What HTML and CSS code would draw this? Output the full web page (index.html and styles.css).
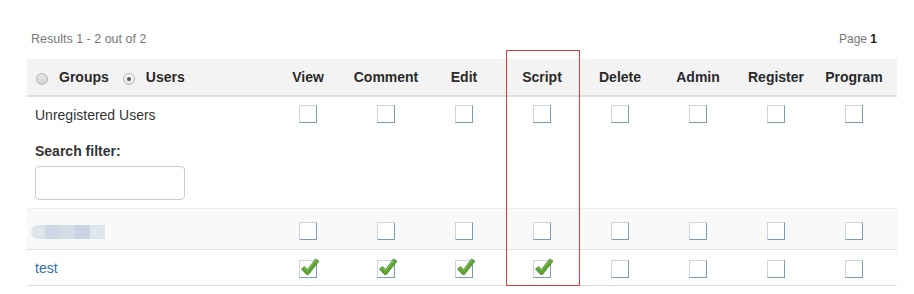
FILE: index.html
```html
<!DOCTYPE html>
<html>
<head>
<meta charset="utf-8">
<link rel="stylesheet" href="styles.css">
</head>
<body>
<div class="wrap">
  <div class="topline">
    <span class="results">Results 1 - 2 out of 2</span>
    <span class="page">Page <b>1</b></span>
  </div>
  <div class="grid">
    <div class="row head">
      <div class="cell first">
        <span class="radio"></span><span class="rlabel">Groups</span>
        <span class="radio on"></span><span class="rlabel">Users</span>
      </div>
      <div class="cell">View</div>
      <div class="cell">Comment</div>
      <div class="cell">Edit</div>
      <div class="cell">Script</div>
      <div class="cell">Delete</div>
      <div class="cell">Admin</div>
      <div class="cell">Register</div>
      <div class="cell">Program</div>
    </div>
    <div class="row r1">
      <div class="cell first">
        <div class="line">Unregistered Users</div>
        <div class="filter-label">Search filter:</div>
        <input class="filter" type="text">
      </div>
      <div class="cell"><span class="cb"></span></div>
      <div class="cell"><span class="cb"></span></div>
      <div class="cell"><span class="cb"></span></div>
      <div class="cell"><span class="cb"></span></div>
      <div class="cell"><span class="cb"></span></div>
      <div class="cell"><span class="cb"></span></div>
      <div class="cell"><span class="cb"></span></div>
      <div class="cell"><span class="cb"></span></div>
    </div>
    <div class="row r2">
      <div class="cell first">
        <div class="blur"><i class="b1"></i><i class="b2"></i><i class="b3"></i><i class="b4"></i><i class="b5"></i></div>
      </div>
      <div class="cell"><span class="cb"></span></div>
      <div class="cell"><span class="cb"></span></div>
      <div class="cell"><span class="cb"></span></div>
      <div class="cell"><span class="cb"></span></div>
      <div class="cell"><span class="cb"></span></div>
      <div class="cell"><span class="cb"></span></div>
      <div class="cell"><span class="cb"></span></div>
      <div class="cell"><span class="cb"></span></div>
    </div>
    <div class="row r3">
      <div class="cell first"><a class="link" href="#">test</a></div>
      <div class="cell"><span class="cb"><svg class="chk" viewBox="0 0 20 20" width="20" height="20"><path d="M1.5 11 L4.5 8.5 L7.5 11.5 L15.5 1 L19 3 L8.5 16.5 L6.5 16.5 Z" fill="#5da431" stroke="#3f7d1f" stroke-width="0.7" stroke-linejoin="round"/><path d="M4 9.5 L7.3 12.6 L16 2" fill="none" stroke="#8cc865" stroke-width="1"/></svg></span></div>
      <div class="cell"><span class="cb"><svg class="chk" viewBox="0 0 20 20" width="20" height="20"><path d="M1.5 11 L4.5 8.5 L7.5 11.5 L15.5 1 L19 3 L8.5 16.5 L6.5 16.5 Z" fill="#5da431" stroke="#3f7d1f" stroke-width="0.7" stroke-linejoin="round"/><path d="M4 9.5 L7.3 12.6 L16 2" fill="none" stroke="#8cc865" stroke-width="1"/></svg></span></div>
      <div class="cell"><span class="cb"><svg class="chk" viewBox="0 0 20 20" width="20" height="20"><path d="M1.5 11 L4.5 8.5 L7.5 11.5 L15.5 1 L19 3 L8.5 16.5 L6.5 16.5 Z" fill="#5da431" stroke="#3f7d1f" stroke-width="0.7" stroke-linejoin="round"/><path d="M4 9.5 L7.3 12.6 L16 2" fill="none" stroke="#8cc865" stroke-width="1"/></svg></span></div>
      <div class="cell"><span class="cb"><svg class="chk" viewBox="0 0 20 20" width="20" height="20"><path d="M1.5 11 L4.5 8.5 L7.5 11.5 L15.5 1 L19 3 L8.5 16.5 L6.5 16.5 Z" fill="#5da431" stroke="#3f7d1f" stroke-width="0.7" stroke-linejoin="round"/><path d="M4 9.5 L7.3 12.6 L16 2" fill="none" stroke="#8cc865" stroke-width="1"/></svg></span></div>
      <div class="cell"><span class="cb"></span></div>
      <div class="cell"><span class="cb"></span></div>
      <div class="cell"><span class="cb"></span></div>
      <div class="cell"><span class="cb"></span></div>
    </div>
    <div class="highlight"></div>
  </div>
</div>
</body>
</html>
```

FILE: styles.css
```css
* { box-sizing: border-box; }
html, body { margin: 0; padding: 0; background: #fff; }
body {
  font-family: "Liberation Sans", Arial, sans-serif;
  font-size: 14px;
  color: #333;
}
.wrap {
  width: 870px;
  margin-left: 27px;
  padding-top: 29px;
}
.topline {
  display: flex;
  justify-content: space-between;
  align-items: center;
  height: 20px;
  padding: 0 20px 0 4px;
  font-size: 12px;
  color: #777;
  margin-bottom: 10px;
}
.results { font-size: 12.5px; }
.page b { color: #222; }
.grid { position: relative; }
.row {
  display: grid;
  grid-template-columns: 242px repeat(8, 78px) 4px;
}
.cell {
  text-align: center;
}
.cell.first { text-align: left; padding-left: 8px; }
.head {
  background: #f3f3f3;
  border-bottom: 2px solid #ddd;
  font-weight: bold;
  color: #2a2a2a;
}
.head .cell { padding: 8px 0; line-height: 20px; }
.head .first { display: flex; align-items: center; padding-left: 9px; }
.radio {
  display: inline-block;
  width: 12px;
  height: 12px;
  border-radius: 50%;
  border: 1px solid #b3b3b3;
  background: linear-gradient(#e8e8e8, #d2d2d2);
  margin-top: 3px;
  position: relative;
}
.radio.on {
  background: linear-gradient(#fafafa, #e6e6e6);
  margin-left: 14px;
}
.radio.on::after {
  content: "";
  position: absolute;
  left: 3px; top: 3px;
  width: 4px; height: 4px;
  border-radius: 50%;
  background: #555;
}
.rlabel { margin-left: 11px; }
.cb {
  display: inline-block;
  width: 18px;
  height: 18px;
  border: 1px solid;
  border-color: #cdd6df #7d9bb8 #7d9bb8 #cdd6df;
  background: #fff;
  position: relative;
  vertical-align: top;
}
.chk { position: absolute; left: 0; top: -3px; }
.r1 .cell { padding-top: 8px; }
.r1 .first { padding-bottom: 8px; }
.line { line-height: 20px; }
.filter-label { font-weight: bold; line-height: 20px; margin-top: 16px; }
.filter {
  display: block;
  margin-top: 5px;
  width: 150px;
  height: 34px;
  border: 1px solid #ccc;
  border-radius: 4px;
  background: #fff;
}
.r2 {
  background: #f9f9f9;
  border-top: 1px solid #eee;
  border-bottom: 1px solid #ddd;
}
.r2 .cell { padding: 13px 0 9px; }
.r2 .first { padding: 16px 0 0 4px; }
.blur { display: flex; height: 14px; }
.blur i { display: block; width: 15px; height: 14px; }
.blur .b1 { background: #dde4ec; border-radius: 7px 0 0 7px; width: 14px; }
.blur .b2 { background: #cdd8e4; }
.blur .b3 { background: #d4dde7; }
.blur .b4 { background: #c9d5e1; }
.blur .b5 { background: #dde5ed; }
.r3 { border-bottom: 1px solid #ddd; }
.r3 .cell { padding: 10px 0 7px; }
.r3 .first { padding-top: 8px; padding-left: 8px; line-height: 20px; }
.link { color: #3470b0; text-decoration: none; }
.highlight {
  position: absolute;
  left: 479px;
  top: -9px;
  width: 74px;
  bottom: 0;
  border: 1px solid #e8383d;
}
```
